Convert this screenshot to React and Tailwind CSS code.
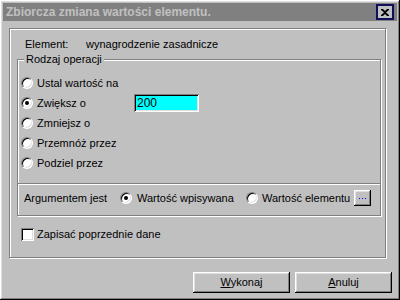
const raised =
    "shadow-[inset_-1px_-1px_0_#000,inset_1px_1px_0_#fff,inset_-2px_-2px_0_#808080,inset_2px_2px_0_#dfdfdf]";
const sunken =
    "shadow-[inset_1px_1px_0_#808080,inset_-1px_-1px_0_#fff,inset_2px_2px_0_#000,inset_-2px_-2px_0_#dfdfdf]";
const etched = "border border-[#808080] shadow-[inset_1px_1px_0_#fff,1px_1px_0_#fff]";

function Radio({ checked }) {
    return (
        <div className="relative w-[12px] h-[12px] shrink-0 rounded-full bg-white border border-t-[#808080] border-l-[#808080] border-b-white border-r-white shadow-[inset_1px_1px_0_#000,inset_-1px_-1px_0_#dfdfdf] flex items-center justify-center">
            {checked && <div className="w-[4px] h-[4px] rounded-full bg-black" />}
        </div>
    );
}

export default function App() {
    const ops = ["Ustal wartość na", "Zwiększ o", "Zmniejsz o", "Przemnóż przez", "Podziel przez"];

    return (
        <div
            className={`w-[400px] h-[300px] bg-[#c0c0c0] p-[3px] flex flex-col text-[11px] text-black font-['Liberation_Sans',Arial,sans-serif] ${raised}`}
        >
            {/* Title bar */}
            <div className="h-[18px] bg-[#808080] flex items-center justify-between pl-[3px] pr-[3px]">
                <span className="text-[12px] font-bold text-[#c0c0c0] leading-none">
                    Zbiorcza zmiana wartości elementu.
                </span>
                <div className="w-[18px] h-[16px] border-2 border-[#10105a] bg-[#c0c0c0] flex items-center justify-center">
                    <svg width="8" height="7" viewBox="0 0 8 7">
                        <path d="M0 0h2l2 2 2-2h2v1L5 3.5 8 6v1H6L4 5 2 7H0V6l3-2.5L0 1z" fill="#000" />
                    </svg>
                </div>
            </div>

            {/* Main frame */}
            <div className={`mt-[7px] ml-[6px] w-[377px] h-[230px] flex flex-col ${etched}`}>
                <div className="mt-[8px] h-[14px] pl-[15px] flex items-center leading-[14px]">
                    <span className="w-[61px]">Element:</span>
                    <span>wynagrodzenie zasadnicze</span>
                </div>

                {/* Rodzaj operacji */}
                <div className={`relative mt-[8px] ml-[7px] w-[364px] h-[157px] flex flex-col ${etched}`}>
                    <span className="absolute left-[6px] top-[-8px] px-[2px] bg-[#c0c0c0] leading-[14px]">
                        Rodzaj operacji
                    </span>
                    <div className="pt-[13px] flex flex-col">
                        {ops.map((op, i) => (
                            <div key={op} className="h-[20px] pl-[3px] flex items-center">
                                <Radio checked={i === 1} />
                                <span className="ml-[4px] w-[97px] leading-[14px]">{op}</span>
                                {i === 1 && (
                                    <div className={`w-[65px] h-[18px] bg-[#00ffff] pl-[3px] flex items-center text-[12px] ${sunken}`}>
                                        200
                                    </div>
                                )}
                            </div>
                        ))}
                    </div>
                    <div className="mt-[10px] h-[2px] border-t border-[#808080] border-b border-b-white" />
                    <div className="mt-[3px] h-[20px] pl-[6px] flex items-center">
                        <span className="w-[96px]">Argumentem jest</span>
                        <Radio checked />
                        <span className="ml-[5px] w-[109px]">Wartość wpisywana</span>
                        <Radio />
                        <span className="ml-[4px] w-[92px]">Wartość elementu</span>
                        <div className={`w-[17px] h-[16px] flex items-center justify-center gap-[1px] ${raised}`}>
                            <div className="w-[1px] h-[1px] bg-[#0000ff]" />
                            <div className="w-[1px] h-[1px] bg-[#0000ff] ml-[1px]" />
                            <div className="w-[1px] h-[1px] bg-[#0000ff] ml-[1px]" />
                        </div>
                    </div>
                </div>

                <div className="mt-[10px] ml-[11px] flex items-center">
                    <div className={`w-[13px] h-[13px] bg-white ${sunken}`} />
                    <span className="ml-[3px]">Zapisać poprzednie dane</span>
                </div>
            </div>

            {/* Buttons */}
            <div className="mt-[14px] pr-[5px] flex justify-end gap-[5px]">
                <button className={`w-[97px] h-[21px] bg-[#c0c0c0] flex items-center justify-center ${raised}`}>
                    <span><u>W</u>ykonaj</span>
                </button>
                <button className={`w-[97px] h-[21px] bg-[#c0c0c0] flex items-center justify-center ${raised}`}>
                    <span><u>A</u>nuluj</span>
                </button>
            </div>
        </div>
    );
}
